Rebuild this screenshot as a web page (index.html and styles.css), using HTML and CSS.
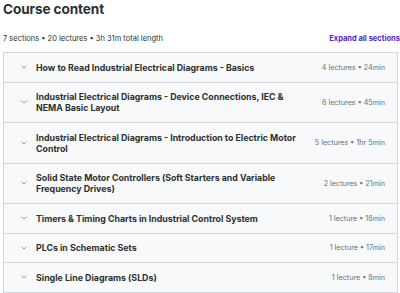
FILE: index.html
```html
<!DOCTYPE html>
<html lang="en">
<head>
<meta charset="utf-8">
<link rel="stylesheet" href="styles.css">
</head>
<body>
<div class="page">
  <h2 class="title">Course content</h2>
  <div class="meta">
    <span class="stats">7 sections • 20 lectures • 3h 31m total length</span>
    <span class="expand">Expand all sections</span>
  </div>
  <div class="sections">
    <div class="row">
      <span class="chev"><svg viewBox="0 0 6 4" width="6" height="4"><path d="M0.6 0.7 L3 3.1 L5.4 0.7" fill="none" stroke="#6a6f73" stroke-width="0.7"/></svg></span>
      <span class="name">How to Read Industrial Electrical Diagrams - Basics</span>
      <span class="info">4 lectures • 24min</span>
    </div>
    <div class="row">
      <span class="chev"><svg viewBox="0 0 6 4" width="6" height="4"><path d="M0.6 0.7 L3 3.1 L5.4 0.7" fill="none" stroke="#6a6f73" stroke-width="0.7"/></svg></span>
      <span class="name">Industrial Electrical Diagrams - Device Connections, IEC &amp; NEMA Basic Layout</span>
      <span class="info">6 lectures • 45min</span>
    </div>
    <div class="row">
      <span class="chev"><svg viewBox="0 0 6 4" width="6" height="4"><path d="M0.6 0.7 L3 3.1 L5.4 0.7" fill="none" stroke="#6a6f73" stroke-width="0.7"/></svg></span>
      <span class="name">Industrial Electrical Diagrams - Introduction to Electric Motor Control</span>
      <span class="info">5 lectures • 1hr 5min</span>
    </div>
    <div class="row">
      <span class="chev"><svg viewBox="0 0 6 4" width="6" height="4"><path d="M0.6 0.7 L3 3.1 L5.4 0.7" fill="none" stroke="#6a6f73" stroke-width="0.7"/></svg></span>
      <span class="name">Solid State Motor Controllers (Soft Starters and Variable Frequency Drives)</span>
      <span class="info">2 lectures • 21min</span>
    </div>
    <div class="row">
      <span class="chev"><svg viewBox="0 0 6 4" width="6" height="4"><path d="M0.6 0.7 L3 3.1 L5.4 0.7" fill="none" stroke="#6a6f73" stroke-width="0.7"/></svg></span>
      <span class="name">Timers &amp; Timing Charts in Industrial Control System</span>
      <span class="info">1 lecture • 18min</span>
    </div>
    <div class="row">
      <span class="chev"><svg viewBox="0 0 6 4" width="6" height="4"><path d="M0.6 0.7 L3 3.1 L5.4 0.7" fill="none" stroke="#6a6f73" stroke-width="0.7"/></svg></span>
      <span class="name">PLCs in Schematic Sets</span>
      <span class="info">1 lecture • 17min</span>
    </div>
    <div class="row">
      <span class="chev"><svg viewBox="0 0 6 4" width="6" height="4"><path d="M0.6 0.7 L3 3.1 L5.4 0.7" fill="none" stroke="#6a6f73" stroke-width="0.7"/></svg></span>
      <span class="name">Single Line Diagrams (SLDs)</span>
      <span class="info">1 lecture • 8min</span>
    </div>
  </div>
</div>
</body>
</html>
```
FILE: styles.css
```css
html, body {
  margin: 0;
  padding: 0;
  background: #ffffff;
}
body {
  font-family: Inter, "Liberation Sans", sans-serif;
  color: #2d2f31;
  overflow: hidden;
}
.page {
  padding: 0 2px 0 3px;
}
.title {
  margin: 0;
  padding-top: 0;
  font-size: 13.6px;
  line-height: 19px;
  font-weight: 700;
  letter-spacing: -0.1px;
  color: #2d2f31;
}
.meta {
  display: flex;
  justify-content: space-between;
  align-items: baseline;
  margin-top: 14px;
  height: 19px;
  font-size: 7.5px;
  line-height: 12px;
}
.stats {
  color: #2d2f31;
}
.expand {
  color: #5624d0;
  font-weight: 700;
  margin-right: -2px;
}
.sections {
  border: 1px solid #d1d7dc;
  border-top: none;
}
.row {
  display: flex;
  align-items: center;
  background: #f7f9fa;
  border-top: 1px solid #d1d7dc;
  padding: 8.75px 12px 8.75px 17px;
}
.chev {
  flex: 0 0 auto;
  width: 15px;
  display: flex;
  align-items: center;
}
.chev svg {
  display: block;
}
.name {
  flex: 1 1 auto;
  font-size: 8.8px;
  line-height: 11px;
  font-weight: 700;
  color: #2d2f31;
  padding-right: 8px;
}
.info {
  flex: 0 0 72px;
  text-align: right;
  font-size: 7.2px;
  line-height: 11px;
  color: #6a6f73;
}
```
